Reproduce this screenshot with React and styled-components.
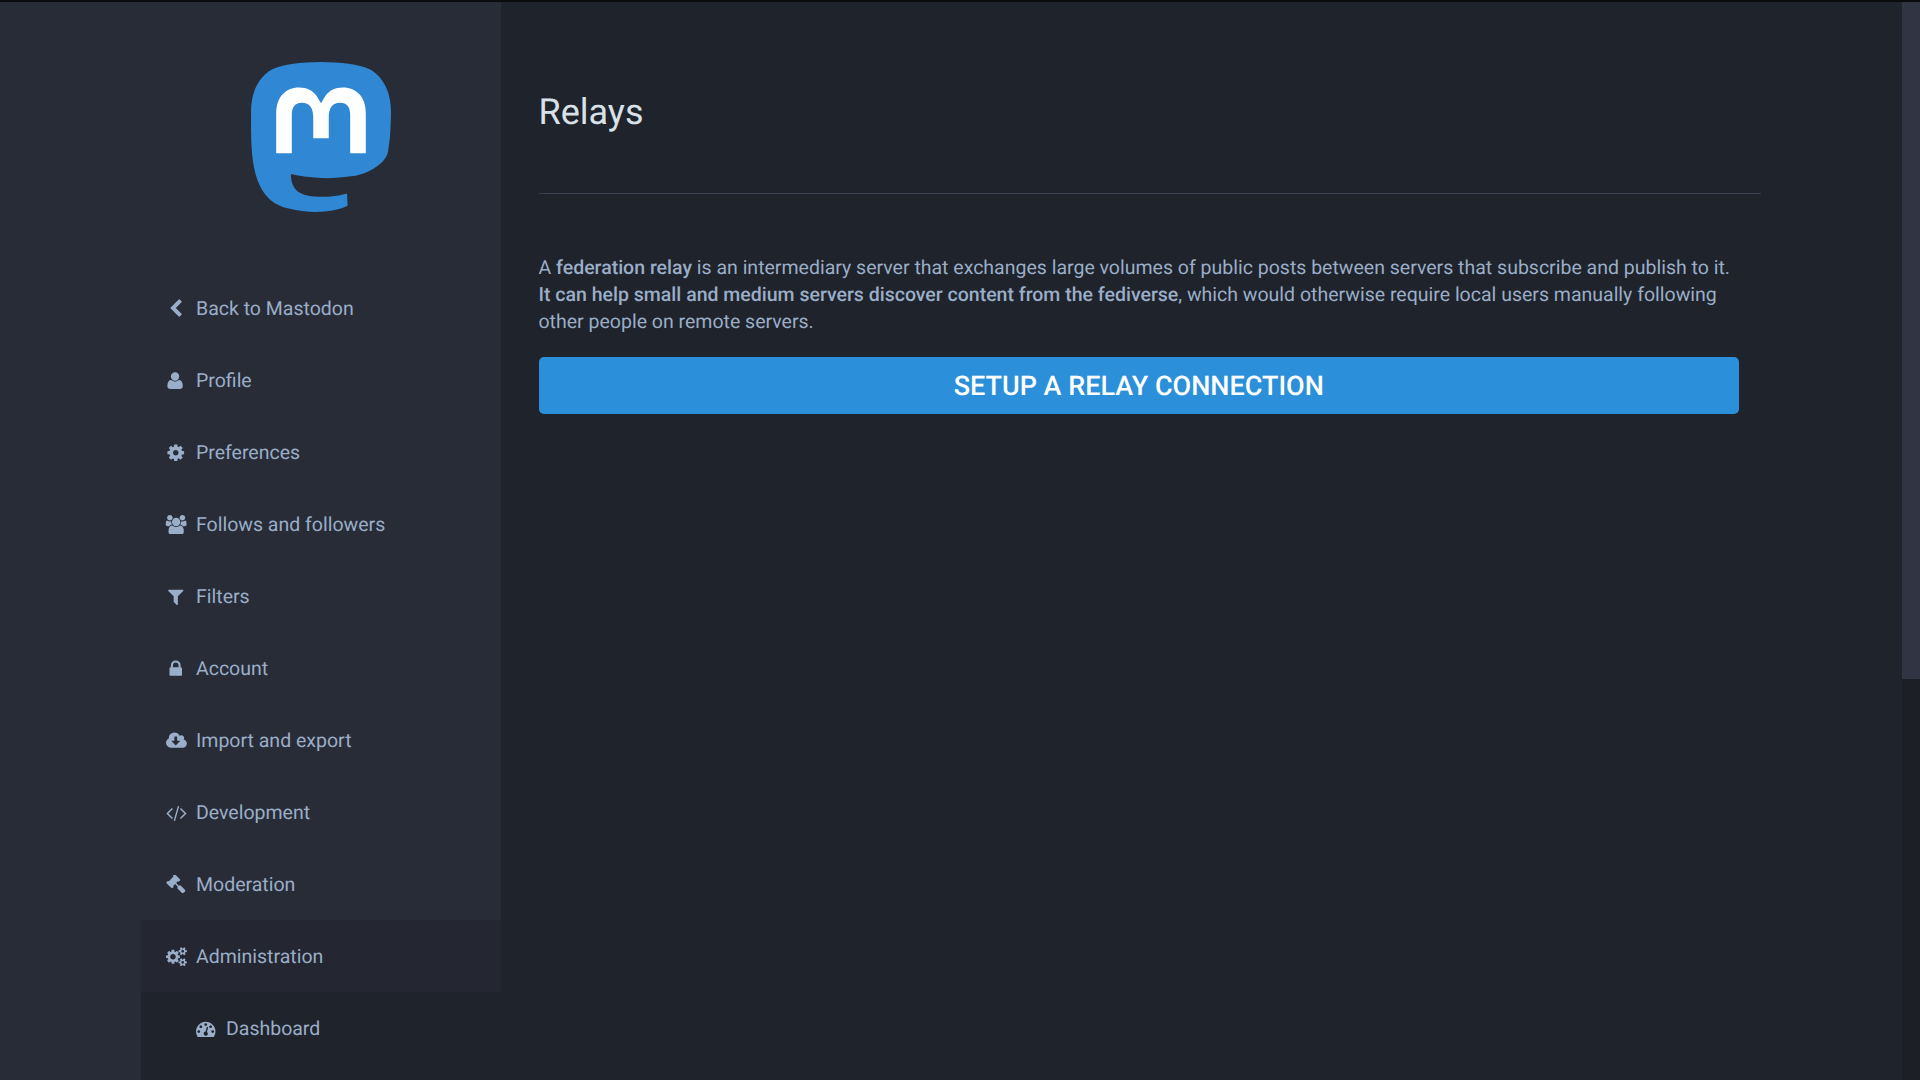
import React from 'react'
import styled, { createGlobalStyle } from 'styled-components'

const GlobalStyle = createGlobalStyle`
  html, body {
    margin: 0;
    height: 100%;
    overflow: hidden;
    background: #1f232b;
  }
  body {
    font-family: Roboto, "Liberation Sans", sans-serif;
    text-rendering: geometricPrecision;
  }
`;

const Page = styled.div`
  display: flex;
  height: 1080px;
  border-top: 2px solid #0a0b0e;
  box-sizing: border-box;
  overflow: hidden;
`;

const SideWrap = styled.aside`
  display: flex;
  flex-direction: column;
  width: 501px;
  flex: none;
  padding-left: 141px;
  box-sizing: border-box;
  background: #282c37;
`;

const LogoBox = styled.div`
  display: flex;
  justify-content: center;
  padding: 60px 0 60px;
`;

const Nav = styled.nav`
  display: flex;
  flex-direction: column;
  flex: 1;
`;

const SubNav = styled.div`
  flex: 1;
  background: #1f232b;
`;

const NavItem = styled.a`
  display: flex;
  align-items: center;
  height: 72px;
  padding-left: ${(p) => (p.$sub ? 52.7 : 22.7)}px;
  box-sizing: border-box;
  font-size: 19.5px;
  color: #9baec8;
  background: ${(p) => (p.$active ? '#242731' : 'transparent')};
  border-radius: ${(p) => (p.$active ? '4px 0 0 0' : '0')};
`;

const IconSlot = styled.span`
  width: 25px;
  margin-right: 7.3px;
  padding-top: 1px;
  display: flex;
  justify-content: center;
  flex: none;
`;

const Main = styled.main`
  flex: 1;
  padding: 0 0 0 37.5px;
`;

const Content = styled.div`
  width: 1222px;
`;

const Heading = styled.div`
  height: 192px;
  border-bottom: 1px solid #393f4f;
  box-sizing: border-box;
  padding-top: 89px;
`;

const Title = styled.h2`
  margin: 0;
  font-size: 36px;
  font-weight: 400;
  line-height: 42px;
  color: #d9e1e8;
`;

const Intro = styled.p`
  margin: 60px 0 0;
  font-size: 19.5px;
  line-height: 27px;
  color: #9baec8;
  strong {
    font-weight: 500;
  }
`;

const ActionLink = styled.a`
  display: flex;
  align-items: center;
  justify-content: center;
  width: 1200.5px;
  height: 57px;
  margin-top: 22px;
  border-radius: 5px;
  background: #2b90d9;
  color: #fff;
  font-size: 27px;
  font-weight: 500;
`;

const Scrollbar = styled.div`
  width: 18px;
  flex: none;
  background: #1c1f26;
`;

const ScrollThumb = styled.div`
  height: 677px;
  background: #313543;
`;

const MastodonLogo = () => (
  <svg width="140" height="150" viewBox="0 0 216.4144 232.00976">
    <path
      fill="#3088d4"
      d="M211.80734 139.0875c-3.18125 16.36625-28.4925 34.2775-57.5625 37.74875-15.15875 1.80875-30.08375 3.47125-45.99875 2.74125-26.0275-1.1925-46.565-6.2125-46.565-6.2125 0 2.53375.15625 4.94625.46875 7.2025 3.38375 25.68625 25.47 27.225 46.39125 27.9425 21.11625.7225 39.91875-5.20625 39.91875-5.20625l.8675 19.09s-14.77 7.93125-41.08125 9.39c-14.50875.7975-32.52375-.365-53.50625-5.91875C9.23234 213.82 1.40609 165.31125.20859 116.09125c-.365-14.61375-.14-28.39375-.14-39.91875 0-50.33 32.97625-65.0825 32.97625-65.0825C49.67234 3.45375 78.20359.2425 107.86484 0h.72875c29.66125.2425 58.21125 3.45375 74.8375 11.09 0 0 32.975 14.7525 32.975 65.0825 0 0 .41375 37.13375-4.59875 62.915"
    />
    <path
      fill="#fff"
      d="M177.50984 80.077v60.94125h-24.14375v-59.15c0-12.46875-5.24625-18.7975-15.74-18.7975-11.6025 0-17.4175 7.5075-17.4175 22.3525v32.37625H96.20734V85.42325c0-14.845-5.81625-22.3525-17.41875-22.3525-10.49375 0-15.74 6.32875-15.74 18.7975v59.15H38.90484V80.077c0-12.455 3.17125-22.3525 9.54125-29.675 6.56875-7.3225 15.17125-11.07625 25.85-11.07625 12.355 0 21.71125 4.74875 27.8975 14.2475l6.01375 10.08125 6.015-10.08125c6.185-9.49875 15.54125-14.2475 27.8975-14.2475 10.6775 0 19.28 3.75375 25.85 11.07625 6.36875 7.3225 9.54 17.22 9.54 29.675"
    />
  </svg>
)

// glyphs in a 1792-high box, so each keeps its own width next to the label
const GLYPHS = {
  back: [1792, 'M1427 301l-531 531 531 531q19 19 19 45t-19 45l-166 166q-19 19-45 19t-45-19l-742-742q-19-19-19-45t19-45l742-742q19-19 45-19t45 19l166 166q19 19 19 45t-19 45z'],
  user: [1792, 'M1536 1399q0 120-73 189.5t-194 69.5h-874q-121 0-194-69.5t-73-189.5q0-53 3.5-103.5t14-109 26.5-108.5 43-97.5 62-81 85.5-53.5 111.5-20q9 0 42 21.5t74.5 48 108 48 133.5 21.5 133.5-21.5 108-48 74.5-48 42-21.5q61 0 111.5 20t85.5 53.5 62 81 43 97.5 26.5 108.5 14 109 3.5 103.5zm-320-893q0 159-112.5 271.5t-271.5 112.5-271.5-112.5-112.5-271.5 112.5-271.5 271.5-112.5 271.5 112.5 112.5 271.5z'],
  cog: [1792, 'M1152 896q0-106-75-181t-181-75-181 75-75 181 75 181 181 75 181-75 75-181zm512-109v222q0 12-8 23t-20 13l-185 28q-19 54-39 91 35 50 107 138 10 12 10 25t-9 23q-27 37-99 108t-94 71q-12 0-26-9l-138-108q-44 23-91 38-16 136-29 186-7 28-36 28h-222q-14 0-24.5-8.5t-11.5-21.5l-28-184q-49-16-90-37l-141 107q-10 9-25 9-14 0-25-11-126-114-165-168-7-10-7-23 0-12 8-23 15-21 51-66.5t54-70.5q-27-50-41-99l-183-27q-13-2-21-12.5t-8-23.5v-222q0-12 8-23t19-13l186-28q14-46 39-92-40-57-107-138-10-12-10-24 0-10 9-23 26-36 98.5-107.5t94.5-71.5q13 0 26 10l138 107q44-23 91-38 16-136 29-186 7-28 36-28h222q14 0 24.5 8.5t11.5 21.5l28 184q49 16 90 37l142-107q9-9 24-9 13 0 25 10 129 119 165 170 7 8 7 22 0 12-8 23-15 21-51 66.5t-54 70.5q26 50 41 98l183 28q13 2 21 12.5t8 23.5z'],
  users: [2048, 'M657 896q-162 5-265 128h-134q-82 0-138-40.5t-56-118.5q0-353 124-353 6 0 43.5 21t97.5 42.5 119 21.5q67 0 133-23-5 37-5 66 0 139 81 256zm1071 637q0 120-73 189.5t-194 69.5h-874q-121 0-194-69.5t-73-189.5q0-53 3.5-103.5t14-109 26.5-108.5 43-97.5 62-81 85.5-53.5 111.5-20q10 0 43 21.5t73 48 107 48 135 21.5 135-21.5 107-48 73-48 43-21.5q61 0 111.5 20t85.5 53.5 62 81 43 97.5 26.5 108.5 14 109 3.5 103.5zm-1024-1277q0 106-75 181t-181 75-181-75-75-181 75-181 181-75 181 75 75 181zm704 384q0 159-112.5 271.5t-271.5 112.5-271.5-112.5-112.5-271.5 112.5-271.5 271.5-112.5 271.5 112.5 112.5 271.5zm576 225q0 78-56 118.5t-138 40.5h-134q-103-123-265-128 81-117 81-256 0-29-5-66 66 23 133 23 59 0 119-21.5t97.5-42.5 43.5-21q124 0 124 353zm-128-609q0 106-75 181t-181 75-181-75-75-181 75-181 181-75 181 75 75 181z'],
  filter: [1792, 'M1595 295q17 41-14 70l-493 493v742q0 42-39 59-13 5-25 5-27 0-45-19l-256-256q-19-19-19-45v-486l-493-493q-31-29-14-70 17-39 59-39h1280q42 0 59 39z'],
  lock: [1792, 'M640 768h512v-192q0-106-75-181t-181-75-181 75-75 181v192zm832 96v576q0 40-28 68t-68 28h-960q-40 0-68-28t-28-68v-576q0-40 28-68t68-28h32v-192q0-184 132-316t316-132 316 132 132 316v192h32q40 0 68 28t28 68z'],
  cloud: [1920, 'M1280 928q0-14-9-23t-23-9h-224v-352q0-13-9.5-22.5t-22.5-9.5h-192q-13 0-22.5 9.5t-9.5 22.5v352h-224q-13 0-22.5 9.5t-9.5 22.5q0 14 9 23l352 352q9 9 23 9t23-9l351-351q10-12 10-24zm640 224q0 159-112.5 271.5t-271.5 112.5h-1088q-185 0-316.5-131.5t-131.5-316.5q0-130 70-240t188-165q-2-30-2-43 0-212 150-362t362-150q156 0 285.5 87t188.5 231q71-62 166-62 106 0 181 75t75 181q0 76-41 138 130 31 213.5 135.5t83.5 238.5z'],
  code: [1920, 'M617 1399l-50 50q-10 10-23 10t-23-10l-466-466q-10-10-10-23t10-23l466-466q10-10 23-10t23 10l50 50q10 10 10 23t-10 23l-393 393 393 393q10 10 10 23t-10 23zm591-1067l-373 1291q-4 13-15.5 19.5t-23.5 2.5l-62-17q-13-4-19.5-15.5t-2.5-24.5l373-1291q4-13 15.5-19.5t23.5-2.5l62 17q13 4 19.5 15.5t2.5 24.5zm657 651l-466 466q-10 10-23 10t-23-10l-50-50q-10-10-10-23t10-23l393-393-393-393q-10-10-10-23t10-23l50-50q10-10 23-10t23 10l466 466q10 10 10 23t-10 23z'],
  gavel: [1792, 'M1771 1440q0 53-37 90l-107 108q-39 37-91 37-53 0-90-37l-363-364q-38-36-38-90 0-53 43-96l-256-256-126 126q-14 14-34 14t-34-14q2 2 12.5 12t12.5 13 10 11.5 10 13.5 6 13.5 5.5 16.5 1.5 18q0 38-28 68-3 3-16.5 18t-19 20.5-18.5 16.5-22 15.5-22 9-26 4.5q-40 0-68-28l-408-408q-28-28-28-68 0-13 4.5-26t9-22 15.5-22 16.5-18.5 20.5-19 18-16.5q30-28 68-28 10 0 18 1.5t16.5 5.5 13.5 6 13.5 10 11.5 10 13 12.5 12 12.5q-14-14-14-34t14-34l348-348q14-14 34-14t34 14q-2-2-12.5-12t-12.5-13-10-11.5-10-13.5-6-13.5-5.5-16.5-1.5-18q0-38 28-68 3-3 16.5-18t19-20.5 18.5-16.5 22-15.5 22-9 26-4.5q40 0 68 28l408 408q28 28 28 68 0 13-4.5 26t-9 22-15.5 22-16.5 18.5-20.5 19-18 16.5q-30 28-68 28-10 0-18-1.5t-16.5-5.5-13.5-6-13.5-10-11.5-10-13-12.5-12-12.5q14 14 14 34t-14 34l-126 126 256 256q43-43 96-43 52 0 91 37l363 363q37 39 37 91z'],
  cogs: [1920, 'M896 896q0-106-75-181t-181-75-181 75-75 181 75 181 181 75 181-75 75-181zm768 512q0-52-38-90t-90-38-90 38-38 90q0 53 37.5 90.5t90.5 37.5 90.5-37.5 37.5-90.5zm0-1024q0-52-38-90t-90-38-90 38-38 90q0 53 37.5 90.5t90.5 37.5 90.5-37.5 37.5-90.5zm-384 421v185q0 10-7 19.5t-16 10.5l-155 24q-11 35-32 76 34 48 90 115 7 11 7 20 0 12-7 19-23 30-82.5 89.5t-78.5 59.5q-11 0-21-7l-115-90q-37 19-77 31-11 108-23 155-7 24-30 24h-186q-11 0-20-7.5t-10-17.5l-23-153q-34-10-75-31l-118 89q-7 7-20 7-11 0-21-8-144-133-144-160 0-9 7-19 10-14 41-53t47-61q-23-44-35-82l-152-24q-10-1-17-9.5t-7-19.5v-185q0-10 7-19.5t16-10.5l155-24q11-35 32-76-34-48-90-115-7-11-7-20 0-12 7-20 22-30 82-89t79-59q11 0 21 7l115 90q34-18 77-32 11-108 23-154 7-24 30-24h186q11 0 20 7.5t10 17.5l23 153q34 10 75 31l118-89q8-7 20-7 11 0 21 8 144 133 144 160 0 8-7 19-12 16-42 54t-45 60q23 48 34 82l152 23q10 2 17 10.5t7 19.5zm640 533v140q0 16-149 31-12 27-30 52 51 113 51 138 0 4-4 7-122 71-124 71-8 0-46-47t-52-68q-20 2-30 2t-30-2q-14 21-52 68t-46 47q-2 0-124-71-4-3-4-7 0-25 51-138-18-25-30-52-149-15-149-31v-140q0-16 149-31 13-29 30-52-51-113-51-138 0-4 4-7 4-2 35-20t59-34 30-16q8 0 46 46.5t52 67.5q20-2 30-2t30 2q51-71 92-112l6-2q4 0 124 70 4 3 4 7 0 25-51 138 17 23 30 52 149 15 149 31zm0-1024v140q0 16-149 31-12 27-30 52 51 113 51 138 0 4-4 7-122 71-124 71-8 0-46-47t-52-68q-20 2-30 2t-30-2q-14 21-52 68t-46 47q-2 0-124-71-4-3-4-7 0-25 51-138-18-25-30-52-149-15-149-31v-140q0-16 149-31 13-29 30-52-51-113-51-138 0-4 4-7 4-2 35-20t59-34 30-16q8 0 46 46.5t52 67.5q20-2 30-2t30 2q51-71 92-112l6-2q4 0 124 70 4 3 4 7 0 25-51 138 17 23 30 52 149 15 149 31z'],
  dashboard: [1792, 'M384 1152q0-53-37.5-90.5t-90.5-37.5-90.5 37.5-37.5 90.5 37.5 90.5 90.5 37.5 90.5-37.5 37.5-90.5zm192-448q0-53-37.5-90.5t-90.5-37.5-90.5 37.5-37.5 90.5 37.5 90.5 90.5 37.5 90.5-37.5 37.5-90.5zm428 481l101-382q6-26-7.5-48.5t-38.5-29.5-48 6.5-30 39.5l-101 382q-60 5-107 43.5t-63 98.5q-20 77 20 146t117 89 146-20 89-117q16-60-6-117t-72-91zm660-33q0-53-37.5-90.5t-90.5-37.5-90.5 37.5-37.5 90.5 37.5 90.5 90.5 37.5 90.5-37.5 37.5-90.5zm-640-640q0-53-37.5-90.5t-90.5-37.5-90.5 37.5-37.5 90.5 37.5 90.5 90.5 37.5 90.5-37.5 37.5-90.5zm448 192q0-53-37.5-90.5t-90.5-37.5-90.5 37.5-37.5 90.5 37.5 90.5 90.5 37.5 90.5-37.5 37.5-90.5zm320 448q0 261-141 483-19 29-54 29h-1402q-35 0-54-29-141-221-141-483 0-182 71-348t191-286 286-191 348-71 348 71 286 191 191 286 71 348z'],
}

const Glyph = ({ name }) => {
  const [width, d] = GLYPHS[name]
  return (
    <svg height="19.5" width={(19.5 * width) / 1792} viewBox={`0 0 ${width} 1792`} fill="currentColor">
      <path d={d} />
    </svg>
  )
}

const navItems = [
  { label: 'Back to Mastodon', icon: 'back' },
  { label: 'Profile', icon: 'user' },
  { label: 'Preferences', icon: 'cog' },
  { label: 'Follows and followers', icon: 'users' },
  { label: 'Filters', icon: 'filter' },
  { label: 'Account', icon: 'lock' },
  { label: 'Import and export', icon: 'cloud' },
  { label: 'Development', icon: 'code' },
  { label: 'Moderation', icon: 'gavel' },
  { label: 'Administration', icon: 'cogs', active: true },
]

const App = () => (
  <>
    <GlobalStyle />
    <Page>
      <SideWrap>
        <LogoBox>
          <MastodonLogo />
        </LogoBox>
        <Nav>
          {navItems.map(({ label, icon, active }) => (
            <NavItem key={label} $active={active}>
              <IconSlot><Glyph name={icon} /></IconSlot>
              {label}
            </NavItem>
          ))}
          <SubNav>
            <NavItem $sub>
              <IconSlot><Glyph name="dashboard" /></IconSlot>
              Dashboard
            </NavItem>
          </SubNav>
        </Nav>
      </SideWrap>
      <Main>
        <Content>
          <Heading>
            <Title>Relays</Title>
          </Heading>
          <Intro>
            A <strong>federation relay</strong> is an intermediary server that exchanges large volumes of public posts between servers that subscribe and publish to it.<br />
            <strong>It can help small and medium servers discover content from the fediverse</strong>, which would otherwise require local users manually following other people on remote servers.
          </Intro>
          <ActionLink>SETUP A RELAY CONNECTION</ActionLink>
        </Content>
      </Main>
      <Scrollbar>
        <ScrollThumb />
      </Scrollbar>
    </Page>
  </>
)

export default App
